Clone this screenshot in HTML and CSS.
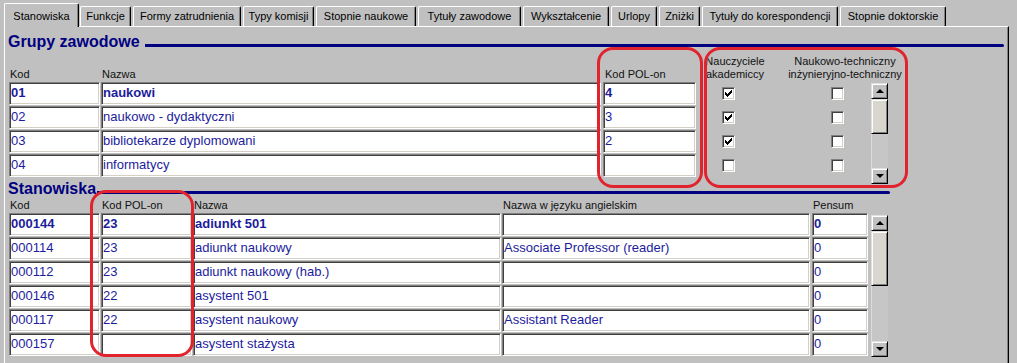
FILE: index.html
```html
<!DOCTYPE html>
<html lang="pl">
<head>
<meta charset="utf-8">
<title>Słowniki</title>
<link rel="stylesheet" href="styles.css">
</head>
<body>
<div class="screen">
  <div class="tabs">
    <div class="tab active">Stanowiska</div>
    <div class="tab">Funkcje</div>
    <div class="tab">Formy zatrudnienia</div>
    <div class="tab">Typy komisji</div>
    <div class="tab">Stopnie naukowe</div>
    <div class="tab">Tytuły zawodowe</div>
    <div class="tab">Wykształcenie</div>
    <div class="tab">Urlopy</div>
    <div class="tab">Zniżki</div>
    <div class="tab">Tytuły do korespondencji</div>
    <div class="tab">Stopnie doktorskie</div>
  </div>

  <div class="panel">
    <section class="group group-top">
      <h2 class="heading heading-top"><span>Grupy zawodowe</span><span class="rule"></span></h2>
      <div class="grid grid-gr">
        <div class="lbl">Kod</div>
        <div class="lbl">Nazwa</div>
        <div class="lbl lbl-pol">Kod POL-on</div>
        <div class="cb-head">
          <span class="cbh cbh1">Nauczyciele<br>akademiccy</span>
          <span class="cbh cbh2">Naukowo-techniczny<br>inżynieryjno-techniczny</span>
        </div>

        <div class="f bold m1">01</div>
        <div class="f bold m2">naukowi</div>
        <div class="f bold">4</div>
        <div class="cbs"><span class="cb on"><svg viewBox="0 0 7 7" width="7" height="7"><path d="M0 2L2 4L6 0H7V2L2 7L0 5Z"/></svg></span><span class="cb"></span></div>
        <div class="scroll scroll-gr">
          <div class="sb-btn"><i class="arr up"></i></div>
          <div class="sb-thumb"></div>
          <div class="sb-track"></div>
          <div class="sb-btn"><i class="arr down"></i></div>
        </div>

        <div class="f m1">02</div>
        <div class="f m2">naukowo - dydaktyczni</div>
        <div class="f">3</div>
        <div class="cbs"><span class="cb on"><svg viewBox="0 0 7 7" width="7" height="7"><path d="M0 2L2 4L6 0H7V2L2 7L0 5Z"/></svg></span><span class="cb"></span></div>

        <div class="f m1">03</div>
        <div class="f m2">bibliotekarze dyplomowani</div>
        <div class="f">2</div>
        <div class="cbs"><span class="cb on"><svg viewBox="0 0 7 7" width="7" height="7"><path d="M0 2L2 4L6 0H7V2L2 7L0 5Z"/></svg></span><span class="cb"></span></div>

        <div class="f m1">04</div>
        <div class="f m2">informatycy</div>
        <div class="f"></div>
        <div class="cbs"><span class="cb"></span><span class="cb"></span></div>
      </div>
    </section>

    <section class="group group-bottom">
      <h2 class="heading heading-bottom"><span>Stanowiska</span><span class="rule"></span></h2>
      <div class="grid grid-st">
        <div class="lbl">Kod</div>
        <div class="lbl">Kod POL-on</div>
        <div class="lbl">Nazwa</div>
        <div class="lbl">Nazwa w języku angielskim</div>
        <div class="lbl">Pensum</div>
        <div></div>

        <div class="f bold m1">000144</div>
        <div class="f bold m1">23</div>
        <div class="f bold m1">adiunkt 501</div>
        <div class="f m2"></div>
        <div class="f bold m3">0</div>
        <div class="scroll scroll-st">
          <div class="sb-btn"><i class="arr up"></i></div>
          <div class="sb-thumb"></div>
          <div class="sb-track"></div>
          <div class="sb-btn"><i class="arr down"></i></div>
        </div>

        <div class="f m1">000114</div>
        <div class="f m1">23</div>
        <div class="f m1">adiunkt naukowy</div>
        <div class="f m2">Associate Professor (reader)</div>
        <div class="f m3">0</div>

        <div class="f m1">000112</div>
        <div class="f m1">23</div>
        <div class="f m1">adiunkt naukowy (hab.)</div>
        <div class="f m2"></div>
        <div class="f m3">0</div>

        <div class="f m1">000146</div>
        <div class="f m1">22</div>
        <div class="f m1">asystent 501</div>
        <div class="f m2"></div>
        <div class="f m3">0</div>

        <div class="f m1">000117</div>
        <div class="f m1">22</div>
        <div class="f m1">asystent naukowy</div>
        <div class="f m2">Assistant Reader</div>
        <div class="f m3">0</div>

        <div class="f m1">000157</div>
        <div class="f m1"></div>
        <div class="f m1">asystent stażysta</div>
        <div class="f m2"></div>
        <div class="f m3">0</div>
      </div>
    </section>
  </div>

  <div class="mark mark-1"></div>
  <div class="mark mark-2"></div>
  <div class="mark mark-3"></div>
</div>
</body>
</html>
```

FILE: styles.css
```css
* { box-sizing: border-box; }

html, body {
  margin: 0;
  padding: 0;
}

body {
  background: #c0c0c0;
  font-family: "Liberation Sans", Arial, sans-serif;
  color: #000;
  width: 1017px;
  height: 363px;
  overflow: hidden;
}

.screen {
  position: relative;
  width: 1017px;
  height: 363px;
}

/* ---------- tabs ---------- */
.tabs {
  display: flex;
  align-items: flex-end;
  height: 26px;
  padding-left: 4px;
}

.tab {
  flex: none;
  height: 20px;
  margin-right: 2px;
  border-top: 1px solid #fff;
  border-left: 1px solid #fff;
  border-right: 1px solid #000;
  border-radius: 2px 2px 0 0;
  box-shadow: inset -1px 0 #808080;
  font-size: 11px;
  line-height: 19px;
  text-align: center;
  white-space: nowrap;
  background: #c0c0c0;
}

.tab.active {
  position: relative;
  z-index: 1;
  width: 75px;
  height: 24px;
  padding-top: 3px;
  margin-bottom: -1px;
  margin-right: 1px;
}

.tab:nth-child(2)  { width: 51px; }
.tab:nth-child(3)  { width: 108px; }
.tab:nth-child(4)  { width: 71px; }
.tab:nth-child(5)  { width: 100px; }
.tab:nth-child(6)  { width: 103px; }
.tab:nth-child(7)  { width: 86px; }
.tab:nth-child(8)  { width: 46px; }
.tab:nth-child(9)  { width: 41px; }
.tab:nth-child(10) { width: 136px; }
.tab:nth-child(11) { width: 106px; }

/* ---------- panel ---------- */
.panel {
  margin-left: 4px;
  width: 1005px;
  height: 337px;
  border-top: 1px solid #fff;
  border-left: 1px solid #fff;
  border-right: 1px solid #000;
  box-shadow: inset -1px 0 #808080;
  padding: 6px 4px 0 3px;
  overflow: hidden;
}

.heading {
  display: flex;
  align-items: flex-end;
  margin: 0;
  font-weight: bold;
  line-height: 18px;
  color: #000080;
  white-space: nowrap;
}

.heading .rule {
  flex: 1;
  height: 3px;
  margin-bottom: 4px;
  background: #000080;
  border-radius: 0 2px 2px 0;
}

.heading-top { font-size: 16px; }
.heading-top .rule { margin-left: 5px; }

.heading-bottom { font-size: 16px; }
.heading-bottom .rule { margin-left: 1px; margin-right: -2px; }

.group-bottom {
  width: max-content;
  margin-top: 3px;
}

/* ---------- grids ---------- */
.grid {
  display: grid;
  row-gap: 1px;
  margin-left: 1px;
}

.grid-gr {
  margin-top: 4px;
  grid-template-columns: 92px 502px 93px 175px 17px;
  grid-template-rows: 26px repeat(4, 23px);
}

.grid-st {
  margin-top: 1px;
  grid-template-columns: 92px 92px 309px 310px 59px 17px;
  grid-template-rows: 13px repeat(6, 23px);
}

.lbl {
  align-self: end;
  padding-left: 1px;
  font-size: 11px;
  line-height: 13px;
  color: #111;
  white-space: nowrap;
}

.lbl-pol { padding-left: 2px; }

.cb-head {
  grid-column: 4 / 6;
  align-self: end;
  display: flex;
  font-size: 11px;
  line-height: 13px;
  color: #111;
}

.cbh {
  flex: none;
  text-align: center;
  white-space: nowrap;
}

.cbh1 { width: 62px; margin-left: 8px; }
.cbh2 { width: 116px; margin-left: 21px; }

/* ---------- fields ---------- */
.f {
  background: #fff;
  border: 1px solid;
  border-color: #808080 #fff #fff #808080;
  box-shadow: inset 1px 1px #404040, inset -1px -1px #d4d0c8;
  padding: 1px 0 0 1px;
  font-size: 13px;
  line-height: 17px;
  color: #1c1c9c;
  white-space: nowrap;
  overflow: hidden;
}

.f.bold { font-weight: bold; }
.m1 { margin-right: 1px; }
.m2 { margin-right: 2px; }
.m3 { margin-right: 3px; }

/* ---------- checkboxes ---------- */
.cbs {
  display: flex;
  align-items: center;
  gap: 96px;
  padding-left: 26px;
}

.cb {
  display: flex;
  align-items: center;
  justify-content: center;
  width: 13px;
  height: 13px;
  background: #fff;
  border: 1px solid;
  border-color: #808080 #fff #fff #808080;
  box-shadow: inset 1px 1px #404040, inset -1px -1px #d4d0c8;
}

.cb svg {
  display: block;
  fill: #000;
  shape-rendering: crispEdges;
}

/* ---------- scrollbars ---------- */
.scroll {
  align-self: start;
  display: flex;
  flex-direction: column;
  background: #c8c8c8;
}

.scroll-gr {
  grid-column: 5;
  grid-row: 2 / span 4;
  margin-top: 1px;
  height: 101px;
}

.scroll-st {
  grid-column: 6;
  grid-row: 2 / span 6;
  margin-top: 2px;
  height: 142px;
}

.sb-btn,
.sb-thumb {
  flex: none;
  border: 1px solid;
  border-color: #dfdfdf #000 #000 #dfdfdf;
  box-shadow: inset 1px 1px #fff, inset -1px -1px #808080;
}

.sb-btn {
  height: 16px;
  display: flex;
  align-items: center;
  justify-content: center;
  background: #c0c0c0;
}

.sb-thumb {
  background: #d8d6cf;
}

.scroll-gr .sb-thumb { height: 35px; }
.scroll-st .sb-thumb { height: 55px; }

.sb-track {
  flex: 1;
  background: #c6c6c6;
  border-left: 1px solid #dcdcdc;
}

.arr {
  display: block;
  width: 0;
  height: 0;
  border-left: 4px solid transparent;
  border-right: 4px solid transparent;
}

.arr.up { border-bottom: 4px solid #000; }
.arr.down { border-top: 4px solid #000; }

/* ---------- red annotation frames ---------- */
.mark {
  position: absolute;
  border: 3px solid #e1232d;
  border-radius: 16px;
  pointer-events: none;
}

.mark-1 { left: 597px; top: 47px; width: 106px; height: 141px; }
.mark-2 { left: 704px; top: 47px; width: 204px; height: 141px; }
.mark-3 { left: 90px; top: 190px; width: 104px; height: 167px; }
```
